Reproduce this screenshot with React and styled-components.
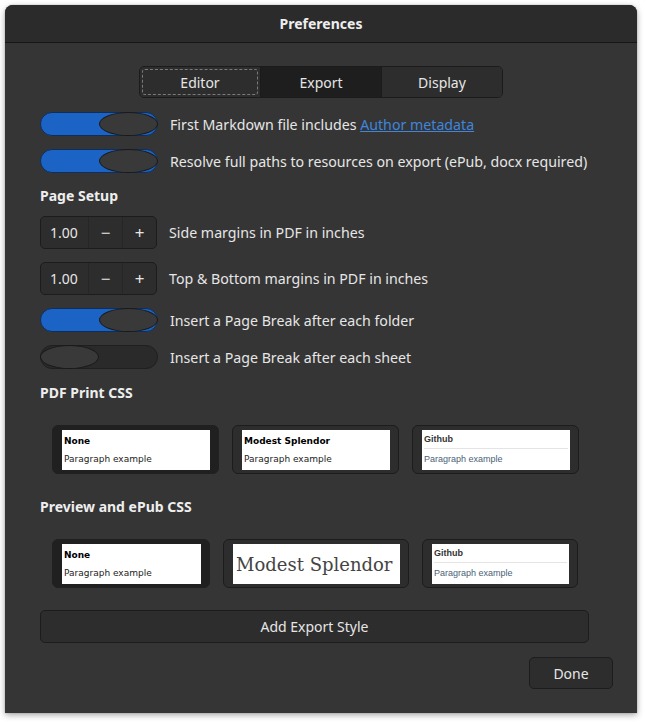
import styled, { createGlobalStyle } from "styled-components"

const Global = createGlobalStyle`
    html, body {
        margin: 0;
        background: #ffffff;
    }
    body {
        font-family: "Noto Sans", "Open Sans", sans-serif;
    }
`

const Window = styled.div`
    margin: 5px 9px 10px 5px;
    width: 632px;
    height: 708px;
    background: #353535;
    border-radius: 8px 8px 0 0;
    box-shadow: 0 2px 6px rgba(0, 0, 0, 0.35), 0 0 1px rgba(0, 0, 0, 0.5);
    display: flex;
    flex-direction: column;
    color: #e6e6e6;
    overflow: hidden;
`

const Header = styled.div`
    height: 37px;
    flex-shrink: 0;
    background: #2b2b2b;
    border-bottom: 1px solid #161616;
    display: flex;
    align-items: center;
    justify-content: center;
    font-weight: 700;
    font-size: 14px;
    color: #eeeeee;
`

const Body = styled.div`
    flex: 1;
    display: flex;
    flex-direction: column;
    padding: 23px 24px 0 35px;
    font-size: 14.2px;
`

const Tabs = styled.div`
    align-self: center;
    margin-left: -11px;
    display: flex;
    border: 1px solid #1b1b1b;
    border-radius: 5px;
    overflow: hidden;
`

const Tab = styled.div`
    width: 120px;
    height: 30px;
    display: flex;
    align-items: center;
    justify-content: center;
    font-size: 14px;
    background: ${p => (p.$active ? "#1e1e1e" : "#2d2d2d")};
    position: relative;
    & + & {
        border-left: 1px solid #1b1b1b;
    }
    &::after {
        content: "";
        display: ${p => (p.$focus ? "block" : "none")};
        position: absolute;
        inset: 2px;
        border: 1px dashed #7a7a7a;
        border-radius: 3px;
    }
`

const Row = styled.div`
    display: flex;
    align-items: center;
    gap: 12px;
    margin-top: ${p => p.$mt}px;
`

const Switch = styled.div`
    width: 118px;
    height: 24px;
    box-sizing: border-box;
    border-radius: 12px;
    border: 1px solid ${p => (p.$on ? "#0e2f5c" : "#1f1f1f")};
    background: ${p => (p.$on ? "#1b64c6" : "#2a2a2a")};
    display: flex;
    justify-content: ${p => (p.$on ? "flex-end" : "flex-start")};
    flex-shrink: 0;
`

const Knob = styled.div`
    width: 59px;
    height: 24px;
    margin-top: -1px;
    box-sizing: border-box;
    border-radius: 50%;
    background: #393939;
    border: 1px solid #1a1a1a;
    margin-right: ${p => (p.$on ? "-1px" : "0")};
    margin-left: ${p => (p.$on ? "0" : "-1px")};
`

const Link = styled.a`
    color: #3f86dc;
    text-decoration: underline;
`

const Heading = styled.div`
    font-weight: 700;
    font-size: 14px;
    margin-top: ${p => p.$mt}px;
    color: #eeeeee;
`

const Spin = styled.div`
    display: flex;
    width: 117px;
    height: 33px;
    box-sizing: border-box;
    border: 1px solid #1c1c1c;
    border-radius: 5px;
    background: #2d2d2d;
    flex-shrink: 0;
`

const SpinValue = styled.div`
    width: 47px;
    display: flex;
    align-items: center;
    padding-left: 9px;
    box-sizing: border-box;
    font-size: 14px;
`

const SpinBtn = styled.div`
    flex: 1;
    display: flex;
    align-items: center;
    justify-content: center;
    border-left: 1px solid #262626;
    font-size: 17px;
`

const Cards = styled.div`
    display: flex;
    gap: 13px;
    margin-top: ${p => p.$mt}px;
    padding-left: 12px;
`

const Card = styled.div`
    width: ${p => p.$w}px;
    height: 49px;
    box-sizing: border-box;
    border-radius: 6px;
    border: 1px solid ${p => (p.$selected ? "#202020" : "#1c1c1c")};
    background: ${p => (p.$selected ? "#202020" : "#2d2d2d")};
    padding: 4px 8px 3px 9px;
    display: flex;
`

const Preview = styled.div`
    flex: 1;
    background: #ffffff;
    color: #111;
    display: flex;
    flex-direction: column;
    justify-content: ${p => (p.$center ? "center" : "flex-start")};
    overflow: hidden;
`

const PlainTitle = styled.div`
    font-family: "DejaVu Sans", sans-serif;
    font-weight: 700;
    font-size: 9px;
    padding: 6px 0 0 2px;
    color: #000;
`

const PlainText = styled.div`
    font-family: "DejaVu Sans", sans-serif;
    font-size: 9px;
    padding: 8px 0 0 2px;
    color: #222;
`

const SerifTitle = styled.div`
    font-family: "DejaVu Serif", "Liberation Serif", serif;
    font-size: 18px;
    color: #444;
    padding-left: 3px;
    white-space: nowrap;
`

const GitTitle = styled.div`
    font-family: "Liberation Sans", sans-serif;
    font-weight: 700;
    font-size: 9px;
    color: #333;
    margin: 4px 2px 0 2px;
    padding-bottom: 4px;
    border-bottom: 1px solid #e4e4e4;
`

const GitText = styled.div`
    font-family: "Liberation Sans", sans-serif;
    font-size: 9px;
    color: #4b5f78;
    padding: 5px 0 0 2px;
`

const WideButton = styled.div`
    margin-top: 22px;
    width: 549px;
    height: 33px;
    box-sizing: border-box;
    border: 1px solid #1c1c1c;
    border-radius: 5px;
    background: #2d2d2d;
    display: flex;
    align-items: center;
    justify-content: center;
    font-size: 14px;
`

const Footer = styled.div`
    display: flex;
    justify-content: flex-end;
    margin-top: 14px;
`

const DoneButton = styled.div`
    width: 84px;
    height: 32px;
    box-sizing: border-box;
    border: 1px solid #1c1c1c;
    border-radius: 5px;
    background: #2d2d2d;
    display: flex;
    align-items: center;
    justify-content: center;
    font-size: 14px;
`

const Toggle = ({ on }) => (
    <Switch $on={on}>
        <Knob $on={on} />
    </Switch>
)

const Spinner = ({ value }) => (
    <Spin>
        <SpinValue>{value}</SpinValue>
        <SpinBtn>−</SpinBtn>
        <SpinBtn>+</SpinBtn>
    </Spin>
)

const StyleCards = ({ mt, serif }) => (
    <Cards $mt={mt}>
        <Card $selected $w={serif ? 158 : 167}>
            <Preview>
                <PlainTitle>None</PlainTitle>
                <PlainText>Paragraph example</PlainText>
            </Preview>
        </Card>
        <Card $w={serif ? 186 : 167}>
            {serif ? (
                <Preview $center>
                    <SerifTitle>Modest Splendor</SerifTitle>
                </Preview>
            ) : (
                <Preview>
                    <PlainTitle>Modest Splendor</PlainTitle>
                    <PlainText>Paragraph example</PlainText>
                </Preview>
            )}
        </Card>
        <Card $w={serif ? 156 : 167}>
            <Preview>
                <GitTitle>Github</GitTitle>
                <GitText>Paragraph example</GitText>
            </Preview>
        </Card>
    </Cards>
)

const App = () => {
    return (
        <Window>
            <Global />
            <Header>Preferences</Header>
            <Body>
                <Tabs>
                    <Tab $focus>Editor</Tab>
                    <Tab $active>Export</Tab>
                    <Tab>Display</Tab>
                </Tabs>
                <Row $mt={14}>
                    <Toggle on />
                    <span>
                        First Markdown file includes <Link>Author metadata</Link>
                    </span>
                </Row>
                <Row $mt={13}>
                    <Toggle on />
                    <span>Resolve full paths to resources on export (ePub, docx required)</span>
                </Row>
                <Heading $mt={13}>Page Setup</Heading>
                <Row $mt={11}>
                    <Spinner value="1.00" />
                    <span>Side margins in PDF in inches</span>
                </Row>
                <Row $mt={13}>
                    <Spinner value="1.00" />
                    <span>Top &amp; Bottom margins in PDF in inches</span>
                </Row>
                <Row $mt={13}>
                    <Toggle on />
                    <span>Insert a Page Break after each folder</span>
                </Row>
                <Row $mt={13}>
                    <Toggle />
                    <span>Insert a Page Break after each sheet</span>
                </Row>
                <Heading $mt={14}>PDF Print CSS</Heading>
                <StyleCards mt={23} />
                <Heading $mt={23}>Preview and ePub CSS</Heading>
                <StyleCards mt={23} serif />
                <WideButton>Add Export Style</WideButton>
                <Footer>
                    <DoneButton>Done</DoneButton>
                </Footer>
            </Body>
        </Window>
    )
}

export default App
